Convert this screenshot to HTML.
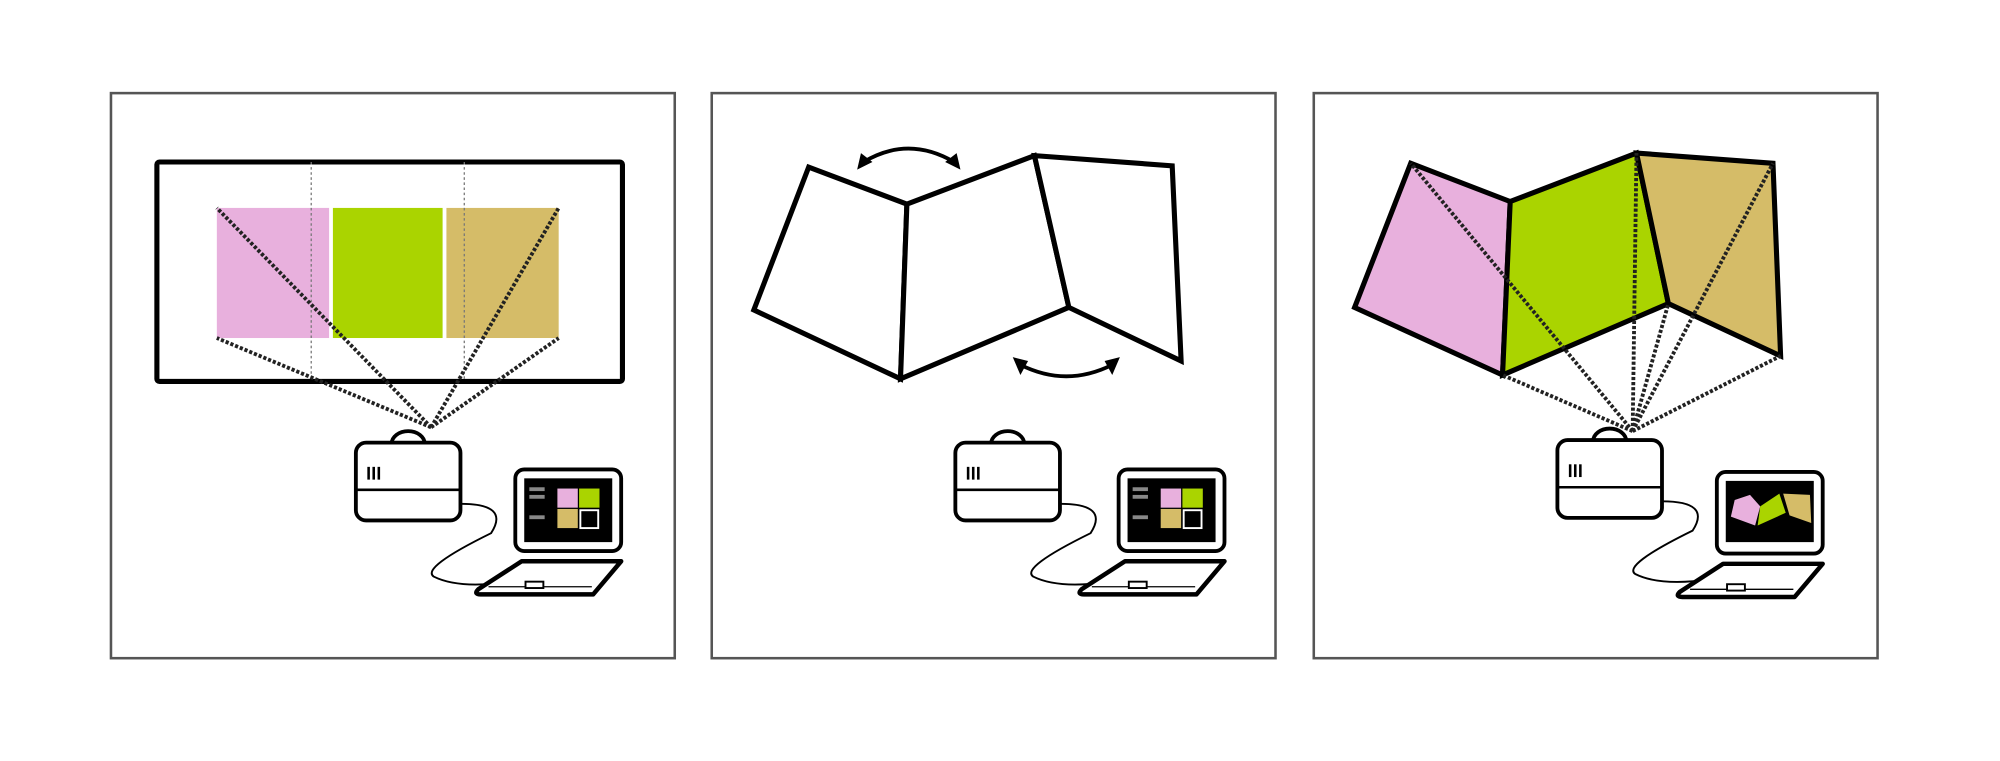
<!DOCTYPE html>
<html><head><meta charset="utf-8"><style>
html,body{margin:0;padding:0;background:#fff;}
svg{display:block;width:2000px;height:761px;}
</style></head><body>
<svg viewBox="0 0 1568 596.6" preserveAspectRatio="none" xmlns="http://www.w3.org/2000/svg">
<defs>
<g id="proj">
  <path d="M-13,3 A13,10 0 0 1 13,3 Z" fill="#fff" stroke="#000" stroke-width="3"/>
  <rect x="-41" y="2" width="82" height="61" rx="8" fill="#fff" stroke="#000" stroke-width="3"/>
  <line x1="-41" y1="39" x2="41" y2="39" stroke="#000" stroke-width="2"/>
  <rect x="-32" y="21" width="2" height="10" fill="#000"/>
  <rect x="-28" y="21" width="2" height="10" fill="#000"/>
  <rect x="-24" y="21" width="2" height="10" fill="#000"/>
</g>
<g id="lapbase">
  <rect x="0" y="0" width="83" height="64" rx="7" fill="#fff" stroke="#000" stroke-width="3"/>
  <path d="M5,72 L83,72 L61,98 L-27,98 Q-33,98 -29,94 Z" fill="#fff" stroke="#000" stroke-width="3.5" stroke-linejoin="round"/>
  <path d="M-21,92 L60,92" stroke="#000" stroke-width="1"/>
  <rect x="8" y="88" width="14" height="5" fill="#fff" stroke="#000" stroke-width="1.5"/>
</g>
</defs>
<rect width="1568" height="597" fill="#fff"/>
<g fill="#fff" stroke="#555" stroke-width="2">
<rect x="87" y="73" width="442" height="443"/>
<rect x="558" y="73" width="442" height="443"/>
<rect x="1030" y="73" width="442" height="443"/>
</g>

<!-- Panel 1 -->
<rect x="170" y="163" width="88" height="102" fill="#e8b0dd"/>
<rect x="261" y="163" width="86" height="102" fill="#aad400"/>
<rect x="350" y="163" width="88" height="102" fill="#d5bc68"/>
<rect x="123" y="127" width="365" height="172" fill="none" stroke="#000" stroke-width="4" rx="2"/>
<g stroke="#777" stroke-width="1" stroke-dasharray="2,2">
<line x1="244" y1="127" x2="244" y2="299"/><line x1="364" y1="127" x2="364" y2="299"/>
</g>
<g stroke="#222" stroke-width="3" stroke-dasharray="2.5,1.5">
<line x1="338" y1="335" x2="170" y2="163"/><line x1="338" y1="335" x2="170" y2="265"/>
<line x1="338" y1="335" x2="438" y2="163"/><line x1="338" y1="335" x2="438" y2="265"/>
</g>
<use href="#proj" x="320" y="345"/>
<path d="M361,395 Q400,395 385,418 Q330,445 340,452 Q360,462 400,456" fill="none" stroke="#000" stroke-width="1.5"/>
<use href="#lapbase" x="404" y="368"/>
<rect x="411" y="375" width="69" height="50" fill="#000"/>
<rect x="415" y="382" width="12" height="3" fill="#888"/><rect x="415" y="388" width="12" height="3" fill="#888"/><rect x="415" y="404" width="12" height="3" fill="#888"/>
<rect x="437" y="383" width="16" height="15" fill="#e8b0dd"/><rect x="454" y="383" width="16" height="15" fill="#aad400"/>
<rect x="437" y="399" width="16" height="15" fill="#d5bc68"/><rect x="455" y="400" width="14" height="14" fill="#000" stroke="#fff" stroke-width="1.5"/>

<!-- Panel 2 -->
<g fill="#fff" stroke="#000" stroke-width="4" stroke-linejoin="miter">
<path d="M634,131 L711,160 L706,297 L591,243 Z"/>
<path d="M711,160 L811,122 L838,241 L706,297 Z"/>
<path d="M811,122 L919,130 L926,283 L838,241 Z"/>
</g>
<path d="M677,127 Q712,106 748,127" fill="none" stroke="#000" stroke-width="3"/>
<path d="M672,133 L675,120 L684,127 Z M753,133 L750,120 L741,127 Z" fill="#000"/>
<path d="M800,286 Q836,304 872,286" fill="none" stroke="#000" stroke-width="3"/>
<path d="M794,280 L800,294 L806,283 Z M878,280 L872,294 L866,283 Z" fill="#000"/>
<use href="#proj" x="790" y="345"/>
<path d="M831,395 Q870,395 855,418 Q800,445 810,452 Q830,462 870,456" fill="none" stroke="#000" stroke-width="1.5"/>
<use href="#lapbase" x="877" y="368"/>
<rect x="884" y="375" width="69" height="50" fill="#000"/>
<rect x="888" y="382" width="12" height="3" fill="#888"/><rect x="888" y="388" width="12" height="3" fill="#888"/><rect x="888" y="404" width="12" height="3" fill="#888"/>
<rect x="910" y="383" width="16" height="15" fill="#e8b0dd"/><rect x="927" y="383" width="16" height="15" fill="#aad400"/>
<rect x="910" y="399" width="16" height="15" fill="#d5bc68"/><rect x="928" y="400" width="14" height="14" fill="#000" stroke="#fff" stroke-width="1.5"/>

<!-- Panel 3 -->
<g stroke="#000" stroke-width="4" stroke-linejoin="miter">
<path d="M1106,128 L1184,158 L1178,294 L1062,241 Z" fill="#e8b0dd"/>
<path d="M1184,158 L1283,120 L1308,238 L1178,294 Z" fill="#aad400"/>
<path d="M1283,120 L1390,128 L1396,279 L1308,238 Z" fill="#d5bc68"/>
</g>
<g stroke="#222" stroke-width="3" stroke-dasharray="2.5,1.5">
<line x1="1280" y1="338" x2="1106" y2="128"/><line x1="1280" y1="338" x2="1178" y2="294"/>
<line x1="1280" y1="338" x2="1283" y2="120"/><line x1="1280" y1="338" x2="1308" y2="238"/>
<line x1="1280" y1="338" x2="1390" y2="128"/><line x1="1280" y1="338" x2="1396" y2="279"/>
</g>
<use href="#proj" x="1262" y="343"/>
<path d="M1303,393 Q1342,393 1327,416 Q1272,443 1282,450 Q1302,460 1342,454" fill="none" stroke="#000" stroke-width="1.5"/>
<use href="#lapbase" x="1346" y="370"/>
<rect x="1353" y="377" width="69" height="48" fill="#000"/>
<path d="M1360,392 L1372,388 L1380,397 L1376,412 L1357,405 Z" fill="#e8b0dd"/>
<path d="M1380,397 L1395,387 L1400,402 L1378,412 Z" fill="#aad400"/>
<path d="M1398,387 L1419,388 L1420,410 L1403,404 Z" fill="#d5bc68"/>
</svg>
</body></html>
